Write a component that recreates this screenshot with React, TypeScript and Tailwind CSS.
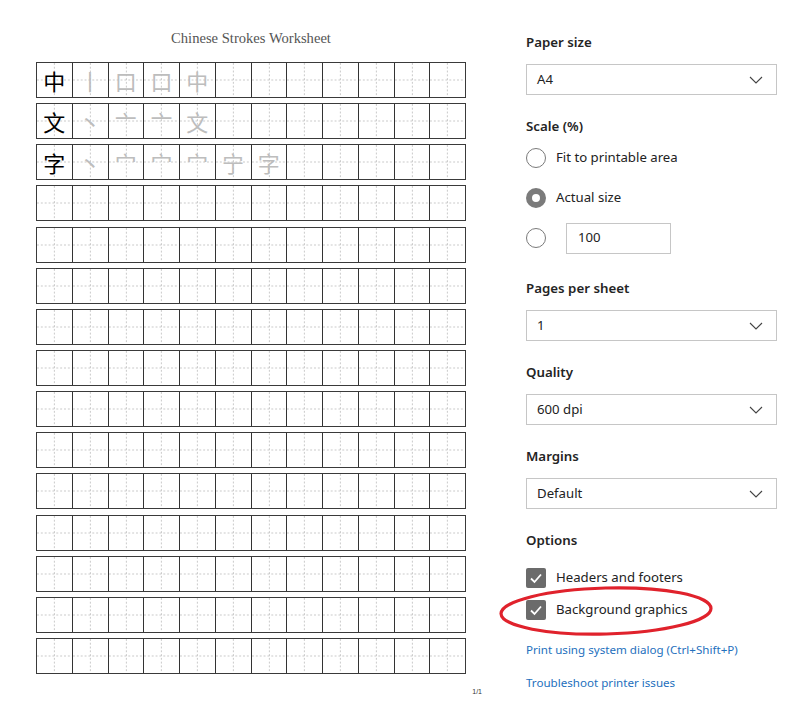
import { ReactNode } from "react";

const strokeRows: string[][] = [
  ["中", "丨", "口", "口", "中"],
  ["文", "丶", "亠", "亠", "文"],
  ["字", "丶", "宀", "宀", "宀", "宁", "字"],
];

function Cell({ ch, first, model }: { ch?: string; first: boolean; model: boolean }) {
  return (
    <div className={`relative flex-1 flex items-center justify-center ${first ? "" : "border-l border-[#333]"}`}>
      {/* dashed guide cross */}
      <svg className="absolute inset-0 w-full h-full" preserveAspectRatio="none" viewBox="0 0 36 36">
        <line x1="18" y1="0" x2="18" y2="36" stroke="#b8b8b8" strokeWidth="0.8" strokeDasharray="2 2" />
        <line x1="0" y1="18" x2="36" y2="18" stroke="#b8b8b8" strokeWidth="0.8" strokeDasharray="2 2" />
      </svg>
      {ch && (
        <span
          className={`relative text-[22px] leading-none font-['Noto_Sans_CJK_SC',sans-serif] ${model ? "text-black" : "text-[#bdbdbd]"}`}
        >
          {ch}
        </span>
      )}
    </div>
  );
}

function Worksheet() {
  const rows = Array.from({ length: 15 }, (_, i) => strokeRows[i] ?? []);
  return (
    <div className="w-[526px] shrink-0 flex flex-col pl-[36px] pt-[28px]">
      <div className="w-[430px] text-center text-[14.6px] leading-[20px] text-[#555] font-['Liberation_Serif',serif]">
        Chinese Strokes Worksheet
      </div>
      <div className="mt-[14px] flex flex-col gap-[5.15px]">
        {rows.map((r, i) => (
          <div key={i} className="w-[430px] h-[36px] flex border-[1.5px] border-[#3a3a3a]">
            {Array.from({ length: 12 }, (_, j) => (
              <Cell key={j} ch={r[j]} first={j === 0} model={j === 0} />
            ))}
          </div>
        ))}
      </div>
      <div className="w-[446px] text-right mt-[13px] text-[7px] leading-[10px] text-[#333] font-['Liberation_Sans',sans-serif]">
        1/1
      </div>
    </div>
  );
}

function Chevron() {
  return (
    <svg width="14" height="8" viewBox="0 0 14 8" fill="none">
      <polyline points="1,1 7,7 13,1" stroke="#444" strokeWidth="1.1" />
    </svg>
  );
}

function Label({ children, className = "" }: { children: ReactNode; className?: string }) {
  return <div className={`text-[13.3px] leading-[20px] font-semibold text-[#242424] ${className}`}>{children}</div>;
}

function Select({ value }: { value: string }) {
  return (
    <div className="mt-[12px] h-[31px] w-[251px] border border-[#c6c6c6] flex items-center justify-between pl-[10px] pr-[13px] text-[13.2px] text-[#222]">
      <span>{value}</span>
      <Chevron />
    </div>
  );
}

function Radio({ checked }: { checked?: boolean }) {
  return checked ? (
    <div className="w-[20px] h-[20px] rounded-full border-[6px] border-[#7b7b7b] bg-white shrink-0" />
  ) : (
    <div className="w-[20px] h-[20px] rounded-full border border-[#7a7a7a] bg-white shrink-0" />
  );
}

function Checkbox() {
  return (
    <div className="w-[20px] h-[20px] rounded-[2px] bg-[#6b6b6b] flex items-center justify-center shrink-0">
      <svg width="16" height="16" viewBox="0 0 16 16" fill="none">
        <polyline points="3,8.5 6.5,12 13,4.5" stroke="white" strokeWidth="1.8" />
      </svg>
    </div>
  );
}

function Settings() {
  return (
    <div className="w-[251px] pt-[32px] flex flex-col text-[#222]">
      <Label>Paper size</Label>
      <Select value="A4" />

      <Label className="mt-[21px]">Scale (%)</Label>
      <div className="mt-[7px] flex flex-col gap-[10px] text-[13.2px]">
        <div className="h-[30px] flex items-center gap-[10px]">
          <Radio />
          <span>Fit to printable area</span>
        </div>
        <div className="h-[30px] flex items-center gap-[10px]">
          <Radio checked />
          <span>Actual size</span>
        </div>
        <div className="h-[30px] flex items-center gap-[20px]">
          <Radio />
          <div className="h-[31px] w-[105px] border border-[#c6c6c6] flex items-center pl-[11px]">100</div>
        </div>
      </div>

      <Label className="mt-[25px]">Pages per sheet</Label>
      <Select value="1" />

      <Label className="mt-[21px]">Quality</Label>
      <Select value="600 dpi" />

      <Label className="mt-[21px]">Margins</Label>
      <Select value="Default" />

      <Label className="mt-[21px]">Options</Label>
      <div className="mt-[18px] flex flex-col gap-[12px] text-[13.2px]">
        <div className="h-[20px] flex items-center gap-[10px]">
          <Checkbox />
          <span>Headers and footers</span>
        </div>
        <div className="h-[20px] flex items-center gap-[10px]">
          <Checkbox />
          <span>Background graphics</span>
        </div>
      </div>

      <div className="mt-[22px] text-[11.6px] leading-[16px] text-[#2470bd]">Print using system dialog (Ctrl+Shift+P)</div>
      <div className="mt-[17px] text-[11.6px] leading-[16px] text-[#2470bd]">Troubleshoot printer issues</div>
    </div>
  );
}

export default function App() {
  return (
    <div className="relative w-[801px] h-[709px] bg-white flex overflow-hidden font-['Noto_Sans',sans-serif]">
      <Worksheet />
      <Settings />

      {/* red annotation ring */}
      <svg className="absolute left-0 top-0 pointer-events-none" width="801" height="709">
        <ellipse
          cx="606"
          cy="611"
          rx="105"
          ry="23"
          fill="none"
          stroke="#e0222c"
          strokeWidth="3.2"
          transform="rotate(-1.5 606 611)"
        />
      </svg>
    </div>
  );
}
